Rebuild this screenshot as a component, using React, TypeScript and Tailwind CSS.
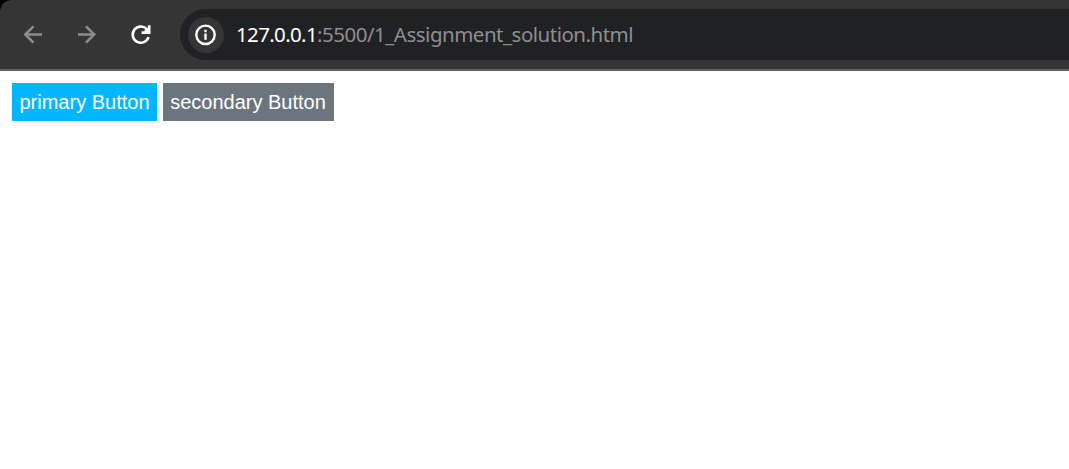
function Toolbar() {
  return (
    <div className="bg-black">
      <header className="flex h-[71px] items-center overflow-hidden rounded-tl-[12px] border-b-2 border-[#5f5f5f] bg-[#353535] pl-[19px]">
        <button aria-label="Back" className="flex w-[54px] shrink-0 text-[#8c8c8c]">
          <svg width="27" height="27" viewBox="0 0 27 27" fill="none" stroke="currentColor" strokeWidth="2.6">
            <path d="M23 13.5H6.5M14.5 5.3L6.3 13.5l8.2 8.2" />
          </svg>
        </button>
        <button aria-label="Forward" className="flex w-[54px] shrink-0 text-[#8c8c8c]">
          <svg width="27" height="27" viewBox="0 0 27 27" fill="none" stroke="currentColor" strokeWidth="2.6">
            <path d="M5 13.5h16M13 5.3l8.2 8.2L13 21.7" />
          </svg>
        </button>
        <button aria-label="Reload" className="flex w-[53px] shrink-0 text-white">
          <svg width="27" height="27" viewBox="0 0 27 27" fill="none" stroke="currentColor" strokeWidth="2.6">
            <path d="M21.5 16.2A8.1 8.1 0 1 1 19.4 7.8L21.7 10.4" />
            <path d="M22.2 4.3v7.3h-7.6" />
            <path d="M18.7 7.2L22.2 11.4L17 11.2Z" fill="currentColor" stroke="none" />
          </svg>
        </button>
        <div className="flex h-[51px] flex-1 items-center rounded-l-full bg-[#202124] pl-[7.5px]">
          <span className="flex size-9 shrink-0 items-center justify-center rounded-full bg-[#353535] text-white">
            <svg width="24" height="24" viewBox="0 0 24 24" fill="none" stroke="currentColor" strokeWidth="2.4">
              <circle cx="11.5" cy="11.8" r="9.2" />
              <path d="M11.5 10.5v6.3M11.5 6.8v2.4" />
            </svg>
          </span>
          <span className="ml-[12.5px] whitespace-nowrap font-['Noto_Sans','Open_Sans',sans-serif] text-[20.5px] leading-none tracking-[-0.5px] text-[#8e8e8f]">
            <span className="tracking-[-0.65px] text-white">127.0.0.1</span>:5500/1_Assignment_solution.html
          </span>
        </div>
      </header>
    </div>
  );
}

export default function App() {
  return (
    <div className="h-[469px] overflow-hidden bg-white">
      <Toolbar />
      <main className="flex gap-1.5 p-3 font-['Liberation_Sans',Arial,sans-serif] text-[20px] leading-[23px] text-white">
        <button className="h-[38px] w-[145px] whitespace-nowrap bg-[#00b7ff]">primary Button</button>
        <button className="h-[38px] w-[171px] whitespace-nowrap bg-[#6c757d] pr-px">secondary Button</button>
      </main>
    </div>
  );
}
